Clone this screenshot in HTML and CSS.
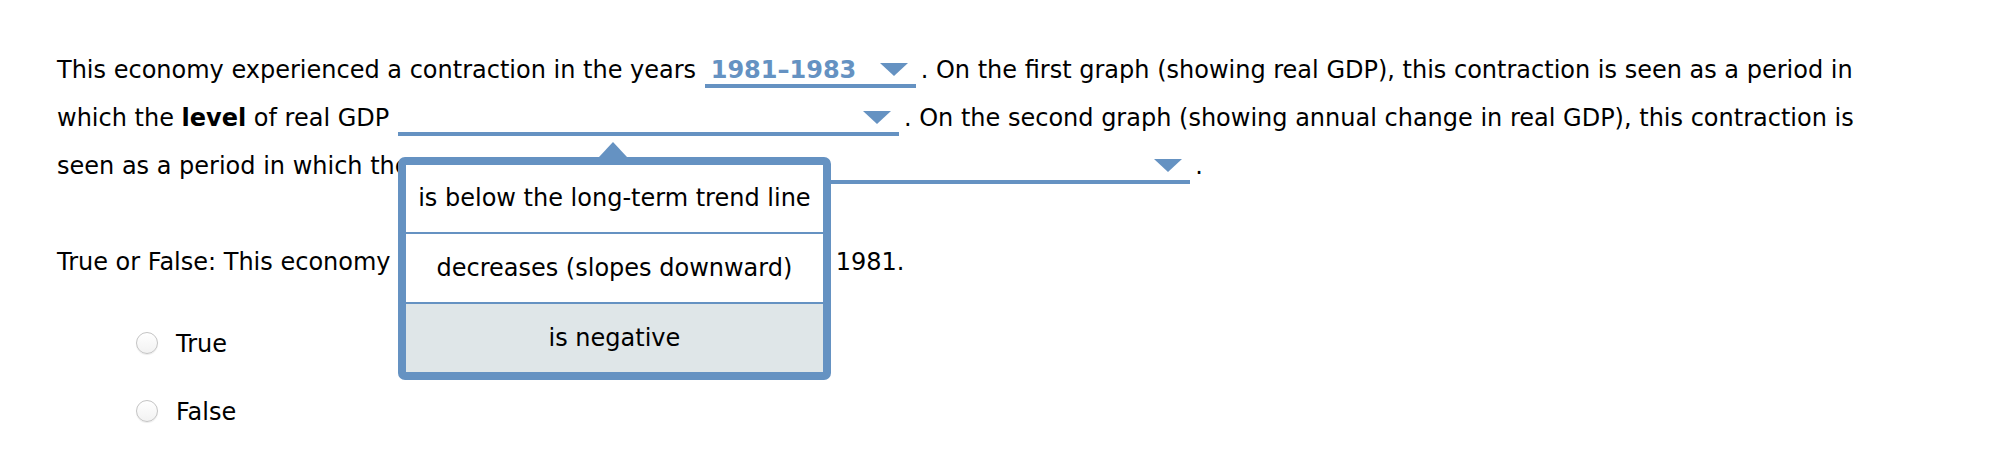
FILE: index.html
```html
<!DOCTYPE html>
<html lang="en">
<head>
    <meta charset="UTF-8">
    <title>Question</title>
    <link rel="stylesheet" href="styles.css">
</head>
<body>
    <div class="question">
        <p class="stem">
            This economy experienced a contraction in the years
            <span class="dropdown dd-years"><span class="dd-value">1981&ndash;1983</span><span class="dd-arrow"></span></span>. On the first graph (showing real GDP), this contraction is seen as a period in
            which the <b>level</b> of real GDP
            <span class="dropdown dd-level open"><span class="dd-value"></span><span class="dd-arrow"></span>
                <span class="dd-menu">
                    <span class="dd-option">is below the long-term trend line</span>
                    <span class="dd-option">decreases (slopes downward)</span>
                    <span class="dd-option hover">is negative</span>
                </span>
            </span>. On the second graph (showing annual change in real GDP), this contraction is
            seen as a period in which the
            <span class="dropdown dd-change"><span class="dd-value"></span><span class="dd-arrow"></span></span>.
        </p>

        <p class="stem">True or False: This economy experienced a decline in the GDP in 1981.</p>

        <div class="choices">
            <label class="choice"><span class="radio"></span>True</label>
            <label class="choice"><span class="radio"></span>False</label>
        </div>
    </div>
</body>
</html>
```

FILE: styles.css
```css
body {
    margin: 0;
    padding: 0;
    background-color: #fff;
    color: #000;
    font-family: "DejaVu Sans", Verdana, sans-serif;
    font-size: 24px;
}
.question {
    padding: 46px 0 0 57px;
    width: 1860px;
}
.stem {
    margin: 0 0 48px 0;
    line-height: 48px;
}
.dropdown {
    display: inline-flex;
    justify-content: space-between;
    align-items: flex-end;
    vertical-align: baseline;
    position: relative;
    box-sizing: border-box;
    height: 32px;
    line-height: 28px;
    padding: 0 8px 0 6px;
    margin: 0 5px 0 1px;
    border-bottom: 4px solid #6592c2;
    cursor: pointer;
}
.dd-years {
    width: 211px;
}
.dd-level {
    width: 501px;
}
.dd-change {
    width: 772px;
}
.dd-value {
    color: #6592c2;
    font-weight: bold;
}
.dd-value:empty::before {
    content: "\200b";
}
.dd-arrow {
    width: 0;
    height: 0;
    border-left: 14px solid transparent;
    border-right: 14px solid transparent;
    border-top: 13px solid #6592c2;
    margin-bottom: 8px;
}
.dd-menu {
    display: none;
    position: absolute;
    left: 0;
    top: calc(100% + 25px);
    width: 433px;
    box-sizing: border-box;
    border: 8px solid #6592c2;
    border-radius: 7px;
    background-color: #fff;
    z-index: 10;
}
.dropdown.open .dd-menu {
    display: block;
}
.dd-menu::before {
    content: "";
    position: absolute;
    top: -23px;
    left: 193px;
    border-left: 14px solid transparent;
    border-right: 14px solid transparent;
    border-bottom: 15px solid #6592c2;
}
.dd-option {
    display: block;
    height: 70px;
    box-sizing: border-box;
    padding: 10px 4px 0;
    line-height: 48px;
    text-align: center;
    color: #000;
    font-weight: normal;
    white-space: nowrap;
    border-top: 2px solid #6592c2;
}
.dd-option:first-child {
    border-top: none;
    height: 67px;
    padding-top: 9px;
}
.dd-option.hover {
    background-color: #dfe6e8;
}
.choices {
    margin-top: -24px;
    padding-left: 79px;
}
.choice {
    display: flex;
    align-items: center;
    height: 68px;
    line-height: 48px;
    cursor: pointer;
}
.radio {
    width: 20px;
    height: 20px;
    border: 1px solid #c4c4c4;
    border-radius: 50%;
    background: linear-gradient(#fff, #f2f2f2);
    box-shadow: 0 1px 1px rgba(0,0,0,0.08);
    margin-right: 18px;
    margin-top: -3px;
}
```
